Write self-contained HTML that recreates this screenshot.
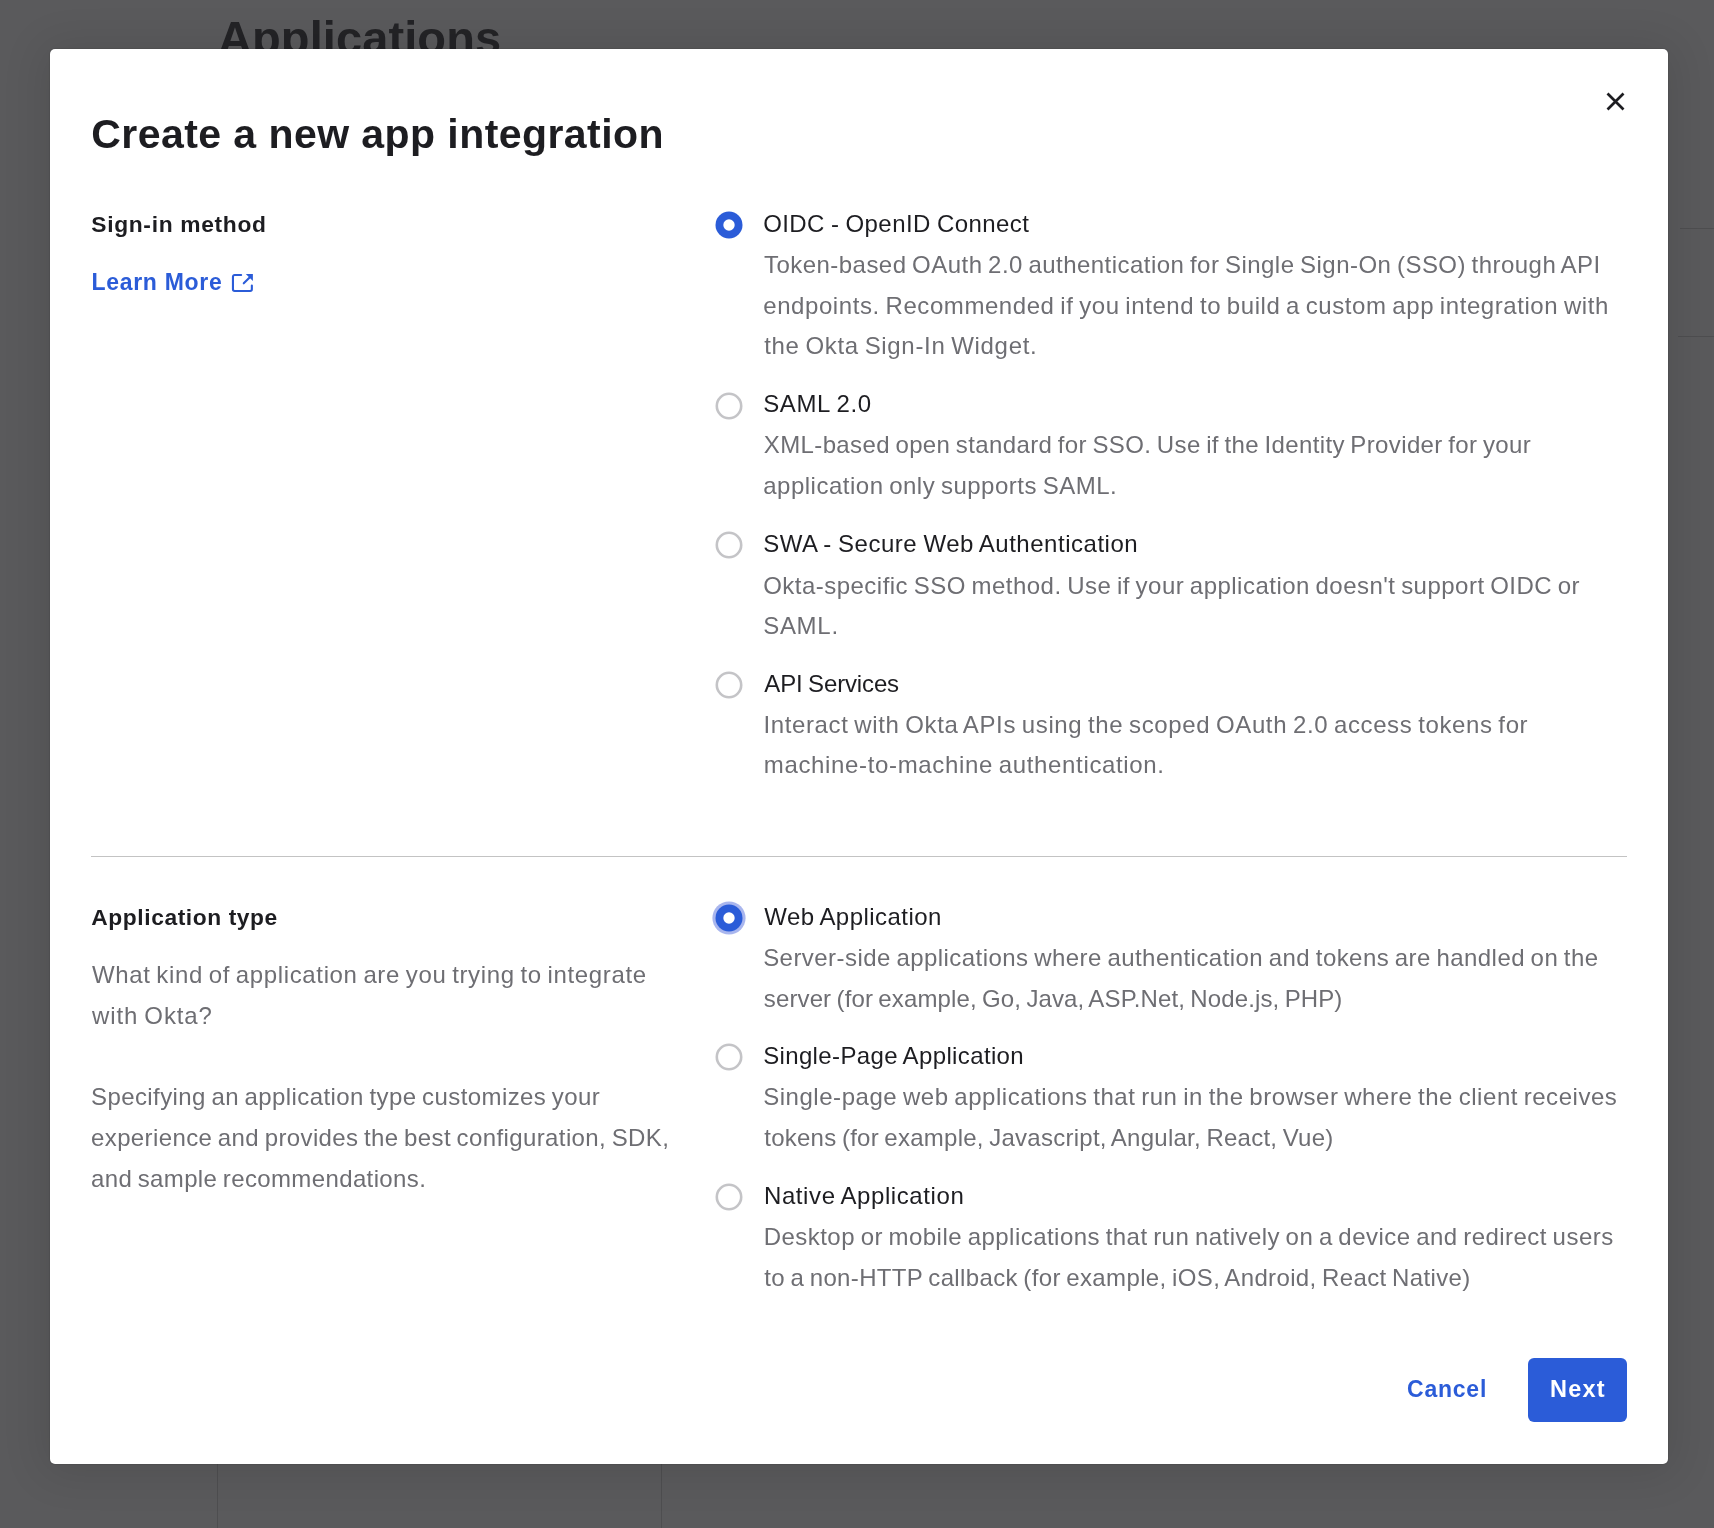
<!DOCTYPE html>
<html lang="en"><head><meta charset="utf-8"><title>Create a new app integration</title>
<meta name="viewport" content="width=1714">
<style>
*{box-sizing:border-box;margin:0;padding:0}
html,body{width:1714px;height:1528px;overflow:hidden;background:#5a5a5c;font-family:"Liberation Sans", Arial, sans-serif;}
.page{will-change:transform;position:absolute;left:0;top:0;width:1714px;height:1528px;overflow:hidden;background:#5a5a5c}
.page h1{position:absolute;left:218px;top:10px;font-size:47px;line-height:56px;font-weight:700;color:#232326;letter-spacing:0.1px;white-space:nowrap}
.page .ln{position:absolute;background:rgba(0,0,0,.13)}
.modal{position:absolute;left:50px;top:49px;width:1618px;height:1415px;background:#fff;border-radius:5px;box-shadow:0 0 2px rgba(0,0,0,.28),0 3px 44px 6px rgba(0,0,0,.11)}
.abs{will-change:transform;position:absolute;left:-50px;top:-49px;width:1714px;height:1528px}
.t{position:absolute;white-space:nowrap;line-height:40px;height:40px}
.title{font-size:41px;font-weight:700;color:#1d1d21;word-spacing:0px}
.head{font-size:22.8px;font-weight:700;color:#1d1d21;word-spacing:0px}
.link{font-size:23px;font-weight:700;color:#2b5cd8;word-spacing:0px}
.btnw{font-size:23.5px;font-weight:700;color:#ffffff;word-spacing:0px}
.label{font-size:24px;font-weight:400;color:#1d1d21;word-spacing:-1.0px}
.desc{font-size:24px;font-weight:400;color:#6e6e73;word-spacing:-1.5px}

a.t{text-decoration:none}
.radio{position:absolute;width:36px;height:36px}
.radio svg{display:block}
hr{position:absolute;left:91px;top:856px;width:1536px;height:1px;border:0;background:#c3c3c3}
.close{position:absolute;left:1603px;top:89px;width:25px;height:25px;background:none;border:0}
.close svg,.ext svg{display:block}
.ext{position:absolute;left:231px;top:273px;width:24px;height:20px}
.next{position:absolute;left:1528px;top:1358px;width:99px;height:64px;border-radius:6px;background:#2b5cd8;border:0}
</style></head>
<body>
<div class="page">
  <h1>Applications</h1>
  <div class="ln" style="left:1680px;top:228px;width:34px;height:1px"></div>
  <div class="ln" style="left:1678px;top:336px;width:36px;height:1px"></div>
  <div class="ln" style="left:217px;top:1464px;width:1px;height:64px"></div>
  <div class="ln" style="left:660.5px;top:1464px;width:1px;height:64px"></div>
</div>
<div class="modal" role="dialog" aria-modal="true"><div class="abs">
  <button class="close" aria-label="Close"><svg width="25" height="25" viewBox="0 0 25 25"><path d="M4.5 4.5 L20.5 20.5 M20.5 4.5 L4.5 20.5" stroke="#1d1d21" stroke-width="2.7" fill="none" stroke-linecap="butt"/></svg></button>
  <h2 class="t title" style="left:91.3px;top:114.39px;letter-spacing:0.437px">Create a new app integration</h2>
  <section>
    <h3 class="t head" style="left:91.25px;top:203.8px;letter-spacing:0.68px">Sign-in method</h3>
    <a class="t link" style="left:91.48px;top:262.23px;letter-spacing:0.704px">Learn More</a>
    <span class="ext"><svg width="24" height="20" viewBox="0 0 24 20"><path d="M10.15 2.05 H3.65 A1.7 1.7 0 0 0 1.95 3.75 V16.3 A1.7 1.7 0 0 0 3.65 18 H19.15 A1.7 1.7 0 0 0 20.85 16.3 V12.55" fill="none" stroke="#2b5cd8" stroke-width="2.1" stroke-linecap="round"/><path d="M12.75 10.35 L18.6 4.5" fill="none" stroke="#2b5cd8" stroke-width="2.1" stroke-linecap="round"/><path d="M14.8 1 H21.9 V8.1 Z" fill="#2b5cd8"/></svg></span>
    <span class="radio on" role="radio" aria-checked="true" style="left:711.45px;top:206.9px"><svg width="36" height="36" viewBox="0 0 36 36"><circle cx="18" cy="18" r="13.5" fill="#2b5cd8"/><circle cx="18" cy="18" r="5.7" fill="#fff"/></svg></span><label class="t label" style="left:763.13px;top:204.18px;letter-spacing:0.432px">OIDC - OpenID Connect</label>
    <p class="t desc" style="left:764.01px;top:245.38px;letter-spacing:0.46px">Token-based OAuth 2.0 authentication for Single Sign-On (SSO) through API</p><p class="t desc" style="left:763.28px;top:285.88px;letter-spacing:0.573px">endpoints. Recommended if you intend to build a custom app integration with</p><p class="t desc" style="left:764.21px;top:326.38px;letter-spacing:0.674px">the Okta Sign-In Widget.</p>
    <span class="radio off" role="radio" aria-checked="false" style="left:711.45px;top:387.7px"><svg width="36" height="36" viewBox="0 0 36 36"><circle cx="18" cy="18" r="12.2" fill="#fff" stroke="#c4c4c7" stroke-width="2.6"/></svg></span><label class="t label" style="left:763.14px;top:384.18px;letter-spacing:0.647px">SAML 2.0</label>
    <p class="t desc" style="left:763.82px;top:425.48px;letter-spacing:0.372px">XML-based open standard for SSO. Use if the Identity Provider for your</p><p class="t desc" style="left:763.23px;top:466.18px;letter-spacing:0.503px">application only supports SAML.</p>
    <span class="radio off" role="radio" aria-checked="false" style="left:711.45px;top:527.3px"><svg width="36" height="36" viewBox="0 0 36 36"><circle cx="18" cy="18" r="12.2" fill="#fff" stroke="#c4c4c7" stroke-width="2.6"/></svg></span><label class="t label" style="left:763.14px;top:524.18px;letter-spacing:0.522px">SWA - Secure Web Authentication</label>
    <p class="t desc" style="left:763.15px;top:565.68px;letter-spacing:0.479px">Okta-specific SSO method. Use if your application doesn't support OIDC or</p><p class="t desc" style="left:763.16px;top:606.18px;letter-spacing:0.721px">SAML.</p>
    <span class="radio off" role="radio" aria-checked="false" style="left:711.45px;top:666.9px"><svg width="36" height="36" viewBox="0 0 36 36"><circle cx="18" cy="18" r="12.2" fill="#fff" stroke="#c4c4c7" stroke-width="2.6"/></svg></span><label class="t label" style="left:764.3px;top:664.18px;letter-spacing:-0.144px">API Services</label>
    <p class="t desc" style="left:763.5px;top:704.88px;letter-spacing:0.62px">Interact with Okta APIs using the scoped OAuth 2.0 access tokens for</p><p class="t desc" style="left:763.8px;top:745.38px;letter-spacing:0.651px">machine-to-machine authentication.</p>
  </section>
  <hr>
  <section>
    <h3 class="t head" style="left:91.33px;top:897.3px;letter-spacing:0.572px">Application type</h3>
    <p class="t desc" style="left:92.0px;top:955.08px;letter-spacing:0.636px">What kind of application are you trying to integrate</p><p class="t desc" style="left:92.0px;top:995.98px;letter-spacing:0.895px">with Okta?</p>
    <p class="t desc" style="left:91.0px;top:1076.68px;letter-spacing:0.414px">Specifying an application type customizes your</p><p class="t desc" style="left:91.0px;top:1118.08px;letter-spacing:0.39px">experience and provides the best configuration, SDK,</p><p class="t desc" style="left:91.0px;top:1158.58px;letter-spacing:0.371px">and sample recommendations.</p>
    <span class="radio focus" role="radio" aria-checked="true" style="left:711.45px;top:900.4px"><svg width="36" height="36" viewBox="0 0 36 36"><circle cx="18" cy="18" r="16.6" fill="#a9b6ee"/><circle cx="18" cy="18" r="13.5" fill="#2b5cd8"/><circle cx="18" cy="18" r="5.7" fill="#fff"/></svg></span><label class="t label" style="left:764.29px;top:897.38px;letter-spacing:0.462px">Web Application</label>
    <p class="t desc" style="left:763.16px;top:938.18px;letter-spacing:0.449px">Server-side applications where authentication and tokens are handled on the</p><p class="t desc" style="left:763.81px;top:978.88px;letter-spacing:0.127px">server (for example, Go, Java, ASP.Net, Node.js, PHP)</p>
    <span class="radio off" role="radio" aria-checked="false" style="left:711.45px;top:1039.4px"><svg width="36" height="36" viewBox="0 0 36 36"><circle cx="18" cy="18" r="12.2" fill="#fff" stroke="#c4c4c7" stroke-width="2.6"/></svg></span><label class="t label" style="left:763.14px;top:1036.48px;letter-spacing:0.365px">Single-Page Application</label>
    <p class="t desc" style="left:763.16px;top:1077.48px;letter-spacing:0.542px">Single-page web applications that run in the browser where the client receives</p><p class="t desc" style="left:764.21px;top:1117.98px;letter-spacing:0.257px">tokens (for example, Javascript, Angular, React, Vue)</p>
    <span class="radio off" role="radio" aria-checked="false" style="left:711.45px;top:1179.1px"><svg width="36" height="36" viewBox="0 0 36 36"><circle cx="18" cy="18" r="12.2" fill="#fff" stroke="#c4c4c7" stroke-width="2.6"/></svg></span><label class="t label" style="left:764.03px;top:1176.18px;letter-spacing:0.586px">Native Application</label>
    <p class="t desc" style="left:763.7px;top:1217.48px;letter-spacing:0.466px">Desktop or mobile applications that run natively on a device and redirect users</p><p class="t desc" style="left:764.21px;top:1258.18px;letter-spacing:0.355px">to a non-HTTP callback (for example, iOS, Android, React Native)</p>
  </section>
  <footer>
    <a class="t link" style="left:1407.09px;top:1369.33px;letter-spacing:0.759px">Cancel</a>
    <button class="next"></button>
    <span class="t btnw" style="left:1550.03px;top:1369.16px;letter-spacing:1.24px">Next</span>
  </footer>
</div></div>
</body></html>
